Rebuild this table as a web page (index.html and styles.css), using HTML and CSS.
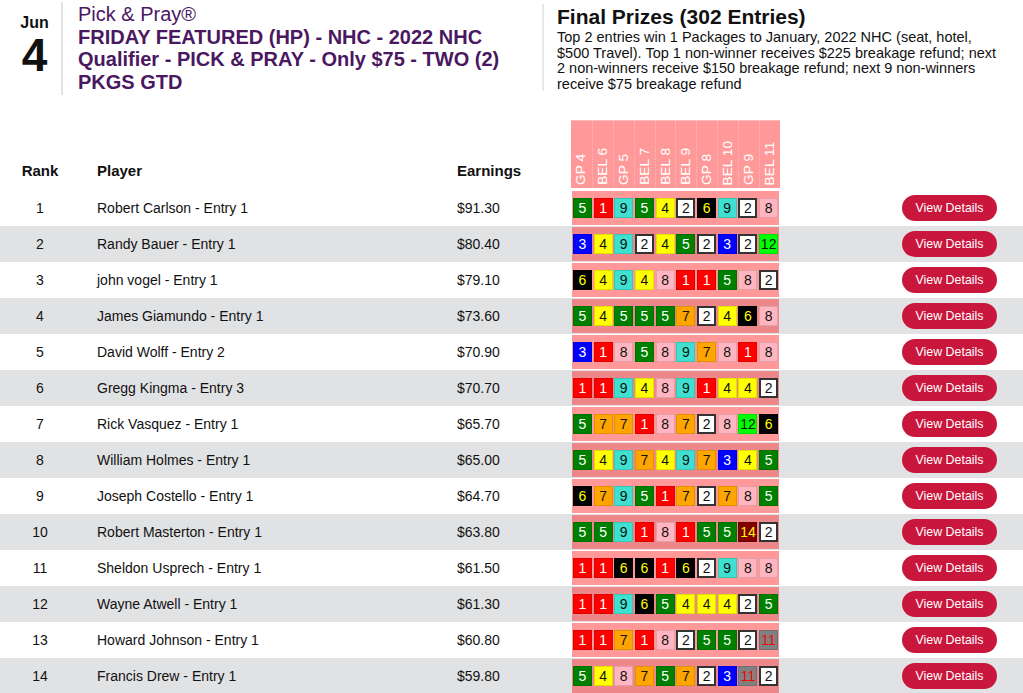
FILE: index.html
```html
<!DOCTYPE html>
<html lang="en">
<head>
<meta charset="utf-8">
<title>Pick &amp; Pray - Leaderboard</title>
<link rel="stylesheet" href="styles.css">
</head>
<body>
<header class="header">
  <div class="date">
    <div class="date-month">Jun</div>
    <div class="date-day">4</div>
  </div>
  <div class="title">
    <div class="title-top">Pick &amp; Pray®</div>
    <div class="title-main">FRIDAY FEATURED (HP) - NHC - 2022 NHC Qualifier - PICK &amp; PRAY - Only $75 - TWO (2) PKGS GTD</div>
  </div>
  <div class="prizes">
    <h2>Final Prizes (302 Entries)</h2>
    <p>Top 2 entries win 1 Packages to January, 2022 NHC (seat, hotel, $500 Travel). Top 1 non-winner receives $225 breakage refund; next 2 non-winners receive $150 breakage refund; next 9 non-winners receive $75 breakage refund</p>
  </div>
</header>

<table class="board">
  <colgroup>
    <col class="c-rank"><col class="c-player"><col class="c-earn"><col class="c-picks"><col class="c-action">
  </colgroup>
  <thead>
    <tr>
      <th class="rank">Rank</th>
      <th class="player">Player</th>
      <th class="earn">Earnings</th>
      <th class="picks-head">
        <div class="labels">
          <div class="label"><span>GP 4</span></div>
          <div class="label"><span>BEL 6</span></div>
          <div class="label"><span>GP 5</span></div>
          <div class="label"><span>BEL 7</span></div>
          <div class="label"><span>BEL 8</span></div>
          <div class="label"><span>BEL 9</span></div>
          <div class="label"><span>GP 8</span></div>
          <div class="label"><span>BEL 10</span></div>
          <div class="label"><span>GP 9</span></div>
          <div class="label"><span>BEL 11</span></div>
        </div>
      </th>
      <th class="action"></th>
    </tr>
  </thead>
  <tbody>
    <tr>
      <td class="rank">1</td><td class="player">Robert Carlson - Entry 1</td><td class="earn">$91.30</td>
      <td class="picks-cell"><div class="picks"><span class="p n5">5</span><span class="p n1">1</span><span class="p n9">9</span><span class="p n5">5</span><span class="p n4">4</span><span class="p n2">2</span><span class="p n6">6</span><span class="p n9">9</span><span class="p n2">2</span><span class="p n8">8</span></div></td>
      <td class="action"><a class="btn">View Details</a></td>
    </tr>
    <tr class="alt">
      <td class="rank">2</td><td class="player">Randy Bauer - Entry 1</td><td class="earn">$80.40</td>
      <td class="picks-cell"><div class="picks"><span class="p n3">3</span><span class="p n4">4</span><span class="p n9">9</span><span class="p n2">2</span><span class="p n4">4</span><span class="p n5">5</span><span class="p n2">2</span><span class="p n3">3</span><span class="p n2">2</span><span class="p n12">12</span></div></td>
      <td class="action"><a class="btn">View Details</a></td>
    </tr>
    <tr>
      <td class="rank">3</td><td class="player">john vogel - Entry 1</td><td class="earn">$79.10</td>
      <td class="picks-cell"><div class="picks"><span class="p n6">6</span><span class="p n4">4</span><span class="p n9">9</span><span class="p n4">4</span><span class="p n8">8</span><span class="p n1">1</span><span class="p n1">1</span><span class="p n5">5</span><span class="p n8">8</span><span class="p n2">2</span></div></td>
      <td class="action"><a class="btn">View Details</a></td>
    </tr>
    <tr class="alt">
      <td class="rank">4</td><td class="player">James Giamundo - Entry 1</td><td class="earn">$73.60</td>
      <td class="picks-cell"><div class="picks"><span class="p n5">5</span><span class="p n4">4</span><span class="p n5">5</span><span class="p n5">5</span><span class="p n5">5</span><span class="p n7">7</span><span class="p n2">2</span><span class="p n4">4</span><span class="p n6">6</span><span class="p n8">8</span></div></td>
      <td class="action"><a class="btn">View Details</a></td>
    </tr>
    <tr>
      <td class="rank">5</td><td class="player">David Wolff - Entry 2</td><td class="earn">$70.90</td>
      <td class="picks-cell"><div class="picks"><span class="p n3">3</span><span class="p n1">1</span><span class="p n8">8</span><span class="p n5">5</span><span class="p n8">8</span><span class="p n9">9</span><span class="p n7">7</span><span class="p n8">8</span><span class="p n1">1</span><span class="p n8">8</span></div></td>
      <td class="action"><a class="btn">View Details</a></td>
    </tr>
    <tr class="alt">
      <td class="rank">6</td><td class="player">Gregg Kingma - Entry 3</td><td class="earn">$70.70</td>
      <td class="picks-cell"><div class="picks"><span class="p n1">1</span><span class="p n1">1</span><span class="p n9">9</span><span class="p n4">4</span><span class="p n8">8</span><span class="p n9">9</span><span class="p n1">1</span><span class="p n4">4</span><span class="p n4">4</span><span class="p n2">2</span></div></td>
      <td class="action"><a class="btn">View Details</a></td>
    </tr>
    <tr>
      <td class="rank">7</td><td class="player">Rick Vasquez - Entry 1</td><td class="earn">$65.70</td>
      <td class="picks-cell"><div class="picks"><span class="p n5">5</span><span class="p n7">7</span><span class="p n7">7</span><span class="p n1">1</span><span class="p n8">8</span><span class="p n7">7</span><span class="p n2">2</span><span class="p n8">8</span><span class="p n12">12</span><span class="p n6">6</span></div></td>
      <td class="action"><a class="btn">View Details</a></td>
    </tr>
    <tr class="alt">
      <td class="rank">8</td><td class="player">William Holmes - Entry 1</td><td class="earn">$65.00</td>
      <td class="picks-cell"><div class="picks"><span class="p n5">5</span><span class="p n4">4</span><span class="p n9">9</span><span class="p n7">7</span><span class="p n4">4</span><span class="p n9">9</span><span class="p n7">7</span><span class="p n3">3</span><span class="p n4">4</span><span class="p n5">5</span></div></td>
      <td class="action"><a class="btn">View Details</a></td>
    </tr>
    <tr>
      <td class="rank">9</td><td class="player">Joseph Costello - Entry 1</td><td class="earn">$64.70</td>
      <td class="picks-cell"><div class="picks"><span class="p n6">6</span><span class="p n7">7</span><span class="p n9">9</span><span class="p n5">5</span><span class="p n1">1</span><span class="p n7">7</span><span class="p n2">2</span><span class="p n7">7</span><span class="p n8">8</span><span class="p n5">5</span></div></td>
      <td class="action"><a class="btn">View Details</a></td>
    </tr>
    <tr class="alt">
      <td class="rank">10</td><td class="player">Robert Masterton - Entry 1</td><td class="earn">$63.80</td>
      <td class="picks-cell"><div class="picks"><span class="p n5">5</span><span class="p n5">5</span><span class="p n9">9</span><span class="p n1">1</span><span class="p n8">8</span><span class="p n1">1</span><span class="p n5">5</span><span class="p n5">5</span><span class="p n14">14</span><span class="p n2">2</span></div></td>
      <td class="action"><a class="btn">View Details</a></td>
    </tr>
    <tr>
      <td class="rank">11</td><td class="player">Sheldon Usprech - Entry 1</td><td class="earn">$61.50</td>
      <td class="picks-cell"><div class="picks"><span class="p n1">1</span><span class="p n1">1</span><span class="p n6">6</span><span class="p n6">6</span><span class="p n1">1</span><span class="p n6">6</span><span class="p n2">2</span><span class="p n9">9</span><span class="p n8">8</span><span class="p n8">8</span></div></td>
      <td class="action"><a class="btn">View Details</a></td>
    </tr>
    <tr class="alt">
      <td class="rank">12</td><td class="player">Wayne Atwell - Entry 1</td><td class="earn">$61.30</td>
      <td class="picks-cell"><div class="picks"><span class="p n1">1</span><span class="p n1">1</span><span class="p n9">9</span><span class="p n6">6</span><span class="p n5">5</span><span class="p n4">4</span><span class="p n4">4</span><span class="p n4">4</span><span class="p n2">2</span><span class="p n5">5</span></div></td>
      <td class="action"><a class="btn">View Details</a></td>
    </tr>
    <tr>
      <td class="rank">13</td><td class="player">Howard Johnson - Entry 1</td><td class="earn">$60.80</td>
      <td class="picks-cell"><div class="picks"><span class="p n1">1</span><span class="p n1">1</span><span class="p n7">7</span><span class="p n1">1</span><span class="p n8">8</span><span class="p n2">2</span><span class="p n5">5</span><span class="p n5">5</span><span class="p n2">2</span><span class="p n11">11</span></div></td>
      <td class="action"><a class="btn">View Details</a></td>
    </tr>
    <tr class="alt">
      <td class="rank">14</td><td class="player">Francis Drew - Entry 1</td><td class="earn">$59.80</td>
      <td class="picks-cell"><div class="picks"><span class="p n5">5</span><span class="p n4">4</span><span class="p n8">8</span><span class="p n7">7</span><span class="p n5">5</span><span class="p n7">7</span><span class="p n2">2</span><span class="p n3">3</span><span class="p n11">11</span><span class="p n2">2</span></div></td>
      <td class="action"><a class="btn">View Details</a></td>
    </tr>
  </tbody>
</table>
</body>
</html>
```

FILE: styles.css
```css
html, body {
  margin: 0;
  padding: 0;
  background: #ffffff;
}

body {
  font-family: "Liberation Sans", Arial, Helvetica, sans-serif;
  color: #111111;
}

/* ---------- header ---------- */
.header {
  display: flex;
  align-items: flex-start;
  height: 96px;
  padding: 2px 0 0 8px;
  box-sizing: border-box;
}

.date {
  width: 55px;
  height: 93px;
  box-sizing: border-box;
  padding-top: 12px;
  border-right: 2px solid #e3e3e3;
  text-align: center;
  color: #111111;
}

.date-month {
  font-size: 16px;
  font-weight: bold;
  line-height: 18px;
}

.date-day {
  font-size: 46px;
  font-weight: bold;
  line-height: 46px;
}

.title {
  width: 450px;
  padding: 1px 0 0 15px;
  color: #4a1761;
  font-size: 20px;
  line-height: 22.6px;
}

.title-main {
  font-weight: bold;
}

.prizes {
  margin: 2px 0 0 14px;
  height: 87px;
  padding: 1px 0 0 13px;
  border-left: 2px solid #e8e8e8;
  box-sizing: border-box;
}

.prizes h2 {
  margin: 0;
  font-size: 21px;
  line-height: 24px;
  font-weight: bold;
  color: #111111;
}

.prizes p {
  margin: 1px 0 0;
  width: 447px;
  font-size: 14.5px;
  line-height: 15.7px;
  color: #111111;
}

/* ---------- table ---------- */
.board {
  width: 1023px;
  margin-top: 24px;
  border-collapse: collapse;
  table-layout: fixed;
}

.c-rank { width: 80px; }
.c-player { width: 365px; }
.c-earn { width: 126px; }
.c-picks { width: 209px; }
.c-action { width: 243px; }

.board thead tr {
  height: 70px;
}

.board th {
  padding: 0 0 11px;
  font-size: 15px;
  font-weight: bold;
  line-height: 17px;
  text-align: left;
  vertical-align: bottom;
  color: #111111;
}

.board th.rank,
.board td.rank {
  text-align: center;
}

.board th.player,
.board td.player {
  padding-left: 17px;
}

.board th.earn,
.board td.earn {
  padding-left: 12px;
}

.board th.picks-head {
  padding: 0;
  vertical-align: top;
}

.labels {
  display: grid;
  grid-template-columns: repeat(10, 1fr);
  height: 68px;
  background: #ff9999;
  box-shadow: inset 0 1px 0 #ffb8b8;
}

.label {
  display: flex;
  justify-content: center;
  align-items: flex-end;
  border-left: 1px dotted rgba(255, 255, 255, 0.35);
}

.label:first-child {
  border-left: 0;
}

.label span {
  writing-mode: vertical-rl;
  transform: rotate(180deg);
  margin-bottom: 3px;
  font-size: 13.7px;
  font-weight: normal;
  line-height: 16px;
  color: #ffffff;
  white-space: nowrap;
}

.board tbody tr {
  height: 36px;
}

.board td {
  padding: 0;
  font-size: 14px;
  line-height: 16px;
  color: #111111;
  vertical-align: middle;
}

.board tr.alt td {
  background: #e1e2e4;
}

.board td.picks-cell {
  padding: 1px;
}

.picks {
  display: grid;
  grid-template-columns: repeat(10, 1fr);
  align-items: center;
  justify-items: center;
  height: 34px;
  background: rgba(255, 0, 0, 0.4);
}

.p {
  display: flex;
  align-items: center;
  justify-content: center;
  width: 19px;
  height: 20px;
  box-sizing: border-box;
  border: 1px solid rgba(0, 0, 0, 0.12);
  font-size: 14px;
  line-height: 1;
}

.n1 { background: #ff0000; color: #ffffff; }
.n2 { background: #ffffff; color: #111111; border: 2px solid #333333; }
.n3 { background: #0000ff; color: #ffffff; }
.n4 { background: #ffff00; color: #111111; }
.n5 { background: #008000; color: #ffffff; }
.n6 { background: #000000; color: #ffff00; }
.n7 { background: #ffa500; color: #111111; }
.n8 { background: #ffb6c1; color: #111111; }
.n9 { background: #40e0d0; color: #111111; }
.n11 { background: #808080; color: #ff0000; }
.n12 { background: #00ff00; color: #111111; }
.n14 { background: #800000; color: #ffff00; }

.board td.action {
  text-align: right;
  padding-right: 26px;
}

.btn {
  display: inline-block;
  height: 26px;
  padding: 0 13.5px;
  border-radius: 13px;
  background: #c9163c;
  color: #ffffff;
  font-size: 12.4px;
  line-height: 26px;
  vertical-align: middle;
  cursor: pointer;
}
```
